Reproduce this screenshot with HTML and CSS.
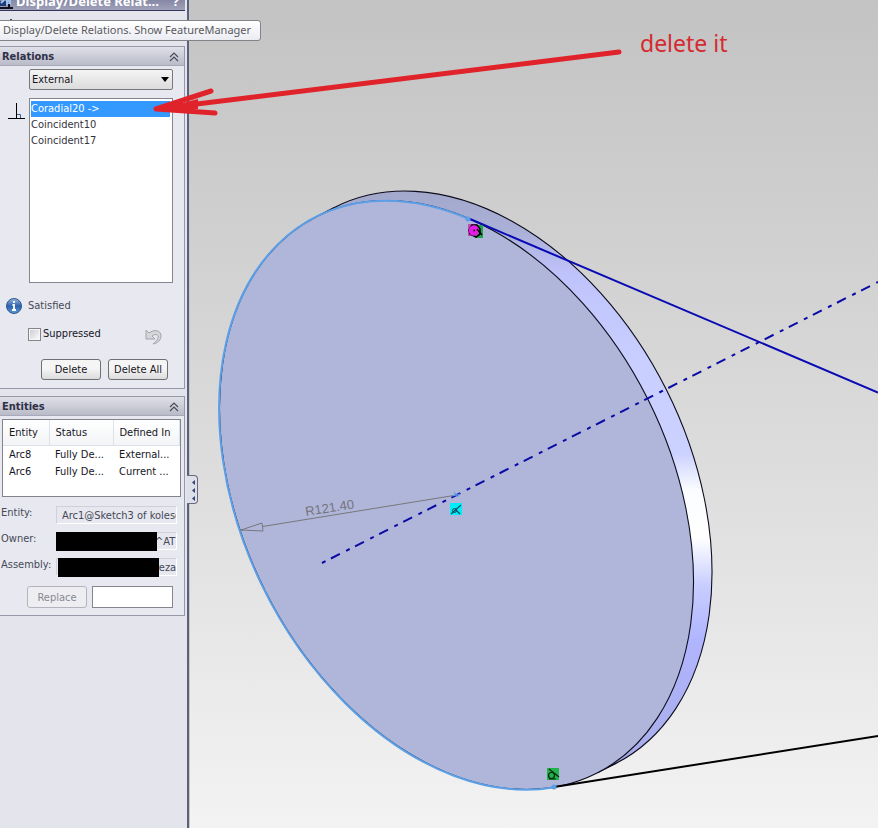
FILE: index.html
```html
<!DOCTYPE html>
<html lang="en">
<head>
<meta charset="utf-8">
<title>Display/Delete Relations</title>
<link rel="stylesheet" href="styles.css">
</head>
<body>
<div class="app">
  <aside class="panel">
    <header class="panel-title">
      <svg class="title-icon" width="14" height="12" viewBox="0 0 14 12" aria-hidden="true">
        <path d="M0 3h6v5H0z" fill="#1d3c78"/>
        <path d="M1 5l3-3M7 1v6M7 3h3v3H8" stroke="#9cc4ee" stroke-width="2" fill="none"/>
        <path d="M0 10h13M9 9V6" stroke="#10101c" stroke-width="2"/>
      </svg>
      <span class="title-text">Display/Delete Relat...</span>
      <span class="title-help">?</span>
    </header>
    <div class="toolbar">
      <svg width="8" height="6" viewBox="0 0 8 6" aria-hidden="true"><path d="M2 5l2-3 2 3" fill="none" stroke="#2b3b2b" stroke-width="1"/></svg>
      <div class="tooltip" role="tooltip">Display/Delete Relations. Show FeatureManager</div>
    </div>

    <section class="group">
      <h2 class="group-head">Relations
        <svg width="10" height="10" viewBox="0 0 10 10" aria-hidden="true"><path d="M1 5l4-4 4 4M1 9l4-4 4 4" fill="none" stroke="#4b4b55" stroke-width="1.200"/></svg>
      </h2>
      <div class="group-body relations">
        <div class="combo">
          <select aria-label="Relation filter"><option>External</option></select>
          <svg class="combo-arrow" width="8" height="5" viewBox="0 0 8 5" aria-hidden="true"><path d="M0 0h8L4 5z" fill="#000"/></svg>
        </div>
        <div class="list-row">
          <svg class="perp" width="18" height="18" viewBox="0 0 18 18" aria-hidden="true">
            <path d="M9.500 1v15M1 16.500h17" stroke="#000" fill="none"/>
            <path d="M10 12.500h3.500V16" stroke="#36608f" fill="none"/>
          </svg>
          <ul class="listbox" role="listbox" aria-label="Relations">
            <li role="option" aria-selected="true">Coradial20 -&gt;</li>
            <li role="option">Coincident10</li>
            <li role="option">Coincident17</li>
          </ul>
        </div>
        <div class="status">
          <svg width="16" height="16" viewBox="0 0 16 16" aria-hidden="true">
            <defs><linearGradient id="info" x1="0" y1="0" x2="0" y2="1"><stop offset="0" stop-color="#9db9de"/><stop offset=".5" stop-color="#2f62ac"/><stop offset="1" stop-color="#5d9bd8"/></linearGradient></defs>
            <circle cx="8" cy="8" r="7.500" fill="url(#info)" stroke="#2c568f"/>
            <path d="M8 3v2M6.500 7H8v5M6 12h4" stroke="#fff" stroke-width="1.800" fill="none"/>
          </svg>
          <span>Satisfied</span>
        </div>
        <div class="suppress">
          <input type="checkbox" id="suppressed"><label for="suppressed">Suppressed</label>
          <svg class="undo" width="18" height="18" viewBox="0 0 18 18" aria-hidden="true">
            <path d="M1 2v9h9L7 8c4-3 7-1 6 2-1 3-3 4-5 6 5-1 8-4 8-8 0-6-7-7-12-3z" fill="#d5d5da" stroke="#a4a4aa"/>
          </svg>
        </div>
        <div class="buttons">
          <button type="button">Delete</button>
          <button type="button">Delete All</button>
        </div>
      </div>
    </section>

    <section class="group">
      <h2 class="group-head">Entities
        <svg width="10" height="10" viewBox="0 0 10 10" aria-hidden="true"><path d="M1 5l4-4 4 4M1 9l4-4 4 4" fill="none" stroke="#4b4b55" stroke-width="1.200"/></svg>
      </h2>
      <div class="group-body entities">
        <div class="table-box">
          <table>
            <thead><tr><th class="c1">Entity</th><th class="c2">Status</th><th>Defined In</th></tr></thead>
            <tbody>
              <tr><td>Arc8</td><td>Fully De...</td><td>External...</td></tr>
              <tr><td>Arc6</td><td>Fully De...</td><td>Current ...</td></tr>
            </tbody>
          </table>
        </div>
        <div class="fields">
          <div class="field">
            <label for="entity">Entity:</label>
            <div class="value"><input id="entity" type="text" readonly value="Arc1@Sketch3 of koleso"></div>
          </div>
          <div class="field">
            <label for="owner">Owner:</label>
            <div class="value masked"><input id="owner" type="text" readonly value="^AT"></div>
          </div>
          <div class="field">
            <label for="assembly">Assembly:</label>
            <div class="value masked shifted"><input id="assembly" type="text" readonly value="reza"></div>
          </div>
        </div>
        <div class="replace">
          <button type="button" disabled>Replace</button>
          <input type="text" aria-label="Replacement entity">
        </div>
      </div>
    </section>
    <button class="handle" type="button" aria-label="Collapse panel">
      <svg width="5" height="23" viewBox="0 0 5 23" aria-hidden="true"><path d="M4 1v5L1 3.500zM4 9v5l-3-2.500zM4 17v5l-3-2.500z" fill="#344374"/></svg>
    </button>
  </aside>

  <main class="viewport">
    <svg class="model" width="688" height="828" viewBox="190 0 688 828" role="img" aria-label="Disc with sketch lines">
      <defs>
        <linearGradient id="rim" gradientUnits="userSpaceOnUse" x1="0" y1="190" x2="0" y2="790">
          <stop offset="0" stop-color="#a2a8cb"/>
          <stop offset=".07" stop-color="#abb0d8"/>
          <stop offset=".14" stop-color="#bfc3fb"/>
          <stop offset=".28" stop-color="#c8ceff"/>
          <stop offset=".44" stop-color="#ccd2ff"/>
          <stop offset=".5" stop-color="#fafcff"/>
          <stop offset=".58" stop-color="#fff"/>
          <stop offset=".66" stop-color="#c7cdff"/>
          <stop offset=".75" stop-color="#b0b5ff"/>
          <stop offset="1" stop-color="#a6abe2"/>
        </linearGradient>
      </defs>
      <g fill="url(#rim)" stroke="#0c0c1c" stroke-width="1.100">
        <path d="M334.900 207.200A311 213.600 63.270 0 1 615.100 763.800A311 213.600 63.270 0 1 334.900 207.200z"/>
        <path d="M315.300 217.200l18.500-9.500M597.700 772.800l18.500-9.500"/>
        <path d="M316.400 216.700A311 213.600 63.270 0 1 596.600 773.300A311 213.600 63.270 0 1 316.400 216.700z" fill="#b0b6d9"/>
      </g>
      <path d="M469 219A311.600 214 63.270 1 0 553 787.500" fill="none" stroke="#5c9fe6" stroke-width="2"/>
      <path d="M554 787L878 736" stroke="#000" stroke-width="2"/>
      <path d="M470 219L878 392.500" stroke="#0a0ab4" stroke-width="2"/>
      <path d="M322 563L878 282" stroke="#0a0aa6" stroke-width="2" stroke-dasharray="4 6 10 7"/>
      <circle cx="468" cy="219" r="2.500" fill="#5c9fe6"/>
      <circle cx="554" cy="787" r="2.500" fill="#5c9fe6"/>
      <g fill="none" stroke="#77777b">
        <path d="M241 530L457 495"/>
        <path d="M241 530l21-7 1 8z" fill="#b0b6d9"/>
      </g>
      <text class="dimension" transform="translate(306 516) rotate(-9)">R121.40</text>
      <path d="M452 496l8-2M454 492l4 5" stroke="#4d9bef"/>
      <g>
        <path d="M468 224h9v12h-9z" fill="#b54db2"/><path d="M475 225h8v13h-8z" fill="#21a14d"/>
        <path d="M472 225h5l3 4v5l-4 3-6-3-1-4z" fill="none" stroke="#000" stroke-width="1.500"/>
        <circle cx="474" cy="230.500" r="5.200" fill="#e21de2"/>
        <path d="M477 229l5 6M473.500 230.500h1.500" fill="none" stroke="#000" stroke-width="1.300"/>
      </g>
      <g>
        <path d="M547 768h12v12h-12z" fill="#22b24c"/>
        <circle cx="551.500" cy="775.500" r="3" fill="none" stroke="#06280e" stroke-width="1.200"/>
        <path d="M549 769l10 8M549 779h7" stroke="#06280e" stroke-width="1.200"/>
      </g>
      <g>
        <path d="M450 503h12v12h-12z" fill="#00eefa"/>
        <circle cx="454.500" cy="510.500" r="2" fill="none" stroke="#064b60"/>
        <path d="M451 514l10-9M455 509l5 5" stroke="#064b60" stroke-width="1.200"/>
      </g>
    </svg>
    <svg class="arrow" width="480" height="70" viewBox="150 47 480 70" aria-hidden="true">
      <g fill="none" stroke="#e0222a" stroke-width="5" stroke-linecap="round" stroke-linejoin="round">
        <path d="M619 52L156 109M211 91L156 109L215 113"/>
        <path d="M160 109l38-10v10z" fill="#e0222a" stroke="none"/>
      </g>
    </svg>
    <p class="note">delete it</p>
  </main>
</div>
</body>
</html>
```
FILE: styles.css
```css
* { box-sizing: border-box; }

body {
  margin: 0;
  color: #16161e;
  font: 11px/16px "DejaVu Sans Condensed", "Noto Sans", sans-serif;
}

button, input, select { font: inherit; color: inherit; }

.app { display: flex; min-height: 100vh; overflow: hidden; }

/* Property panel */
.panel {
  position: relative;
  flex: 0 0 190px;
  min-width: 0;
  padding-right: 5px;
  background: linear-gradient(90deg, #e3e4ec 0 187px, #5d6078 187px 189px, #c6c8d0 189px);
}

.panel-title {
  display: flex;
  align-items: flex-end;
  height: 11px;
  overflow: hidden;
  color: #fff;
  font-family: "Noto Sans", sans-serif;
  font-size: 13px;
  font-weight: 700;
  background: linear-gradient(#8587a4, #a0a2ba);
  border-bottom: 1px solid #35365a;
}
.title-icon { flex: none; margin-right: 2px; }
.title-text, .title-help { line-height: 18px; white-space: nowrap; }
.title-help { margin: 0 6px 0 auto; }

.toolbar { position: relative; height: 35px; padding: 6px 0 0 7px; line-height: 0; }
.tooltip {
  position: absolute;
  z-index: 3;
  top: 9px;
  left: -4px;
  width: 265px;
  height: 21px;
  padding: 0 6px;
  color: #5a5a60;
  font-family: "Noto Sans", sans-serif;
  line-height: 18px;
  white-space: nowrap;
  background: linear-gradient(#fff, #ebecf3);
  border: 1px solid #828288;
  border-radius: 3px;
}

.group { margin-bottom: 7px; border: 1px solid #9698a8; border-left: 0; background: #e7e8f0; }
.group-head {
  display: flex;
  align-items: center;
  justify-content: space-between;
  height: 19px;
  margin: 0;
  padding: 1px 5px 0 2px;
  color: #2e3048;
  font-size: 11px;
  font-weight: 700;
  background: linear-gradient(#dfe0e8, #b9bbc8);
  border-bottom: 1px solid #a7a9b8;
}

.relations { padding: 3px 11px 8px 0; }
.combo { position: relative; margin-left: 29px; }
.combo select {
  display: block;
  width: 100%;
  height: 21px;
  padding: 1px 2px 0;
  appearance: none;
  background: linear-gradient(#f4f4f4, #dcdcdc);
  border: 1px solid #77777c;
  border-radius: 2px;
}
.combo-arrow { position: absolute; top: 8px; right: 4px; }

.list-row { display: flex; margin-top: 8px; }
.perp { flex: 0 0 18px; margin: 4px 4px 0 7px; }
.listbox {
  flex: 1;
  height: 185px;
  margin: 0;
  padding: 2px 2px 0 1px;
  list-style: none;
  background: #fff;
  border: 1px solid #85858e;
}
.listbox li { color: #34343c; }
.listbox li[aria-selected="true"] { color: #fff; background: #3399ff; }

.status { display: flex; gap: 6px; align-items: center; margin-top: 15px; padding-left: 6px; color: #464856; }
.suppress { display: flex; align-items: center; height: 18px; margin-top: 11px; padding-left: 28px; }
.suppress input {
  width: 13px;
  height: 13px;
  margin: 0 2px 0 0;
  appearance: none;
  background: linear-gradient(135deg, #c8cacf, #fff);
  border: 1px solid #85858a;
  outline: 1px solid #f6f6f6;
  outline-offset: -2px;
}
.undo { margin: 6px 10px 0 auto; }
.buttons { display: flex; justify-content: flex-end; gap: 7px; margin-top: 16px; padding-right: 5px; }
.buttons button, .replace button {
  width: 60px;
  height: 21px;
  padding: 1px 0 0;
  line-height: 18px;
  background: linear-gradient(#f5f5f5 45%, #dcdcdc);
  border: 1px solid #707074;
  border-radius: 3px;
}

.entities { padding: 3px 3px 7px 0; }
.table-box { height: 78px; margin-left: 2px; overflow: hidden; background: #fff; border: 1px solid #82838e; }
table { width: 100%; table-layout: fixed; border-collapse: collapse; }
th, td { padding: 0 0 0 6px; font-weight: 400; text-align: left; white-space: nowrap; line-height: 17px; }
th { height: 25px; background: linear-gradient(#fff, #f3f4f7); border: solid #dfe1e8; border-width: 0 1px 1px 0; }
.c1 { width: 46px; }
.c2 { width: 64px; }

.fields { display: grid; gap: 8px; margin-top: 9px; }
.field { display: flex; gap: 2px; height: 18px; color: #464856; }
.field label { flex: 0 0 54px; padding-left: 1px; line-height: 14px; }
.value { position: relative; flex: 1; min-width: 0; margin-right: 4px; }
.field input {
  display: block;
  width: 100%;
  height: 18px;
  padding: 0 0 0 5px;
  background: #e6e7ef;
  border: 1px solid #cfd0d9;
  border-right-color: #fff;
  border-bottom-color: #fff;
  outline: 0;
}
.field .masked input { padding-left: 98px; }
.masked::before { content: ""; position: absolute; top: 0; left: 0; width: 101px; height: 19px; background: #000; }
.shifted::before { left: 2px; }
.replace { display: flex; gap: 5px; margin: 10px 8px 0 27px; }
.replace button { flex: none; height: 22px; color: #898991; background: #eeeef2; border-color: #b2b3bc; }
.replace input { flex: 1; min-width: 0; height: 22px; background: #fff; border: 1px solid #85858e; }

.handle {
  position: absolute;
  z-index: 2;
  top: 475px;
  left: 187px;
  width: 11px;
  height: 29px;
  padding: 2px 0 0 2px;
  line-height: 0;
  background: #dddfe9;
  border: 1px solid #686a7c;
  border-left: 0;
  border-radius: 0 4px 4px 0;
}

/* Graphics area */
.viewport { position: relative; flex: 1; min-width: 0; background: linear-gradient(#c3c3c3, #dcdcdc 55%, #f3f3f3); }
.model { display: block; }
.dimension { fill: #74747c; font: 13px "Liberation Sans", sans-serif; }
.arrow { position: absolute; z-index: 4; top: 47px; left: -40px; }
.note { position: absolute; top: 29px; left: 450px; margin: 0; color: #d42b30; font: 23px/28px "Noto Sans", sans-serif; white-space: nowrap; }
```
